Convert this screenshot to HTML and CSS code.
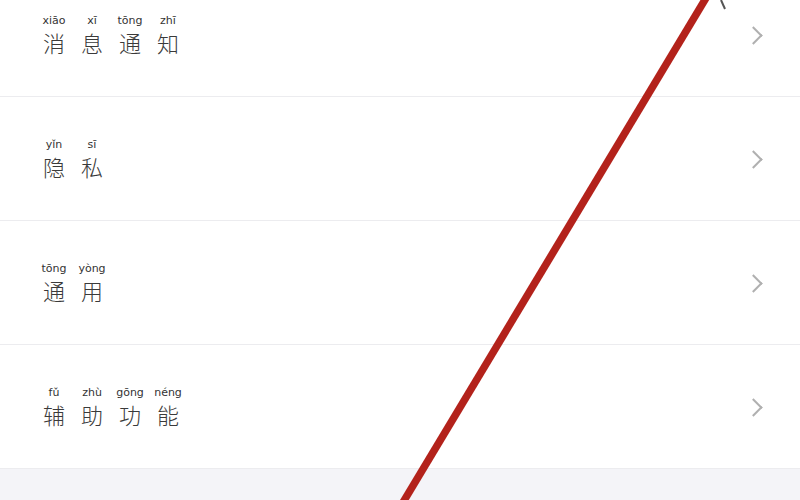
FILE: index.html
```html
<!DOCTYPE html>
<html lang="zh">
<head>
<meta charset="utf-8">
<link rel="stylesheet" href="styles.css">
</head>
<body>
<div class="page">
  <ul class="list">
    <li class="row">
      <span class="label">
        <span class="ch"><span class="py">xiāo</span><span class="hz">消</span></span>
        <span class="ch"><span class="py">xī</span><span class="hz">息</span></span>
        <span class="ch"><span class="py">tōng</span><span class="hz">通</span></span>
        <span class="ch"><span class="py">zhī</span><span class="hz">知</span></span>
      </span>
      <span class="chev"></span>
    </li>
    <li class="row">
      <span class="label">
        <span class="ch"><span class="py">yǐn</span><span class="hz">隐</span></span>
        <span class="ch"><span class="py">sī</span><span class="hz">私</span></span>
      </span>
      <span class="chev"></span>
    </li>
    <li class="row">
      <span class="label">
        <span class="ch"><span class="py">tōng</span><span class="hz">通</span></span>
        <span class="ch"><span class="py">yòng</span><span class="hz">用</span></span>
      </span>
      <span class="chev"></span>
    </li>
    <li class="row">
      <span class="label">
        <span class="ch"><span class="py">fǔ</span><span class="hz">辅</span></span>
        <span class="ch"><span class="py">zhù</span><span class="hz">助</span></span>
        <span class="ch"><span class="py">gōng</span><span class="hz">功</span></span>
        <span class="ch"><span class="py">néng</span><span class="hz">能</span></span>
      </span>
      <span class="chev"></span>
    </li>
  </ul>
  <div class="footer"></div>
  <svg class="arrow" width="800" height="500" viewBox="0 0 800 500">
    <line x1="706" y1="-2" x2="402" y2="504" stroke="#b3221b" stroke-width="7.5" stroke-linecap="butt"/>
    <line x1="721" y1="0" x2="725" y2="9" stroke="#555" stroke-width="2"/>
  </svg>
</div>
</body>
</html>
```

FILE: styles.css
```css
html, body {
  margin: 0;
  padding: 0;
  background: #ffffff;
  overflow: hidden;
}
.page {
  position: relative;
  width: 800px;
  height: 500px;
  overflow: hidden;
  background: #f4f4f8;
}
.list {
  list-style: none;
  margin: -27px 0 0 0;
  padding: 0;
  background: #ffffff;
}
.row {
  height: 124px;
  box-sizing: border-box;
  border-bottom: 1px solid #ececef;
  display: flex;
  align-items: center;
  justify-content: space-between;
  padding: 0 36px 0 42px;
}
.label {
  display: flex;
  gap: 14px;
  margin-top: 2px;
}
.ch {
  display: flex;
  flex-direction: column;
  align-items: center;
  width: 24px;
}
.py {
  font-family: "DejaVu Sans", sans-serif;
  font-size: 11px;
  line-height: 13px;
  color: #333333;
  white-space: nowrap;
}
.hz {
  font-family: "Noto Sans CJK SC", sans-serif;
  font-weight: 300;
  font-size: 22px;
  line-height: 30px;
  color: #3a3a3a;
}
.chev {
  width: 11px;
  height: 11px;
  border-right: 2.5px solid #b0b0b0;
  border-top: 2.5px solid #b0b0b0;
  transform: rotate(45deg);
  margin-right: 4px;
  margin-top: 2px;
}
.footer {
  height: 40px;
  background: #f4f4f8;
}
.arrow {
  position: absolute;
  left: 0;
  top: 0;
}
```
